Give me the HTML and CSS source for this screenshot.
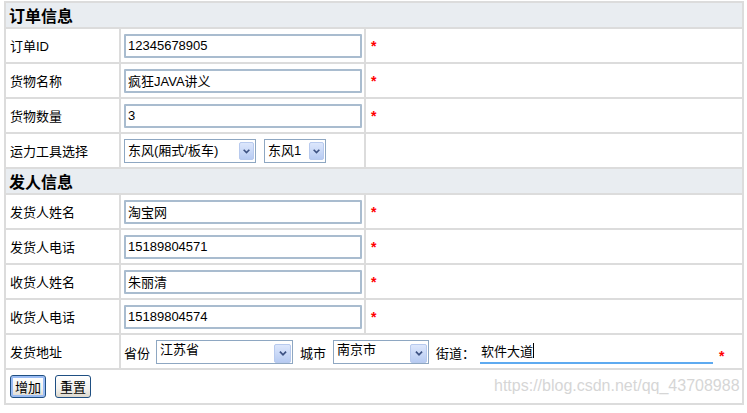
FILE: index.html
```html
<!DOCTYPE html>
<html lang="zh-CN">
<head>
<meta charset="utf-8">
<title>订单</title>
<link rel="stylesheet" href="styles.css">
</head>
<body>
<form class="order-form">
  <table class="form-table">
    <colgroup>
      <col class="c-label">
      <col class="c-field">
      <col class="c-mark">
    </colgroup>
    <tr class="section"><th colspan="3">订单信息</th></tr>
    <tr class="row">
      <td class="label">订单ID</td>
      <td class="field"><input class="text" type="text" value="12345678905"></td>
      <td class="mark"><span class="req">*</span></td>
    </tr>
    <tr class="row">
      <td class="label">货物名称</td>
      <td class="field"><input class="text" type="text" value="疯狂JAVA讲义"></td>
      <td class="mark"><span class="req">*</span></td>
    </tr>
    <tr class="row">
      <td class="label">货物数量</td>
      <td class="field"><input class="text" type="text" value="3"></td>
      <td class="mark"><span class="req">*</span></td>
    </tr>
    <tr class="row">
      <td class="label">运力工具选择</td>
      <td class="field">
        <div class="inline">
          <span class="sel sel-truck">
            <select><option>东风(厢式/板车)</option></select>
            <span class="arrow"><svg viewBox="0 0 16 18" width="14" height="16"><path d="M4.5 7.5 L8 11 L11.5 7.5" fill="none" stroke="#3d5283" stroke-width="2"/></svg></span>
          </span>
          <span class="sel sel-model">
            <select><option>东风1</option></select>
            <span class="arrow"><svg viewBox="0 0 16 18" width="14" height="16"><path d="M4.5 7.5 L8 11 L11.5 7.5" fill="none" stroke="#3d5283" stroke-width="2"/></svg></span>
          </span>
        </div>
      </td>
      <td class="mark"></td>
    </tr>
    <tr class="section"><th colspan="3">发人信息</th></tr>
    <tr class="row">
      <td class="label">发货人姓名</td>
      <td class="field"><input class="text" type="text" value="淘宝网"></td>
      <td class="mark"><span class="req">*</span></td>
    </tr>
    <tr class="row">
      <td class="label">发货人电话</td>
      <td class="field"><input class="text" type="text" value="15189804571"></td>
      <td class="mark"><span class="req">*</span></td>
    </tr>
    <tr class="row">
      <td class="label">收货人姓名</td>
      <td class="field"><input class="text" type="text" value="朱丽清"></td>
      <td class="mark"><span class="req">*</span></td>
    </tr>
    <tr class="row">
      <td class="label">收货人电话</td>
      <td class="field"><input class="text" type="text" value="15189804574"></td>
      <td class="mark"><span class="req">*</span></td>
    </tr>
    <tr class="row">
      <td class="label">发货地址</td>
      <td class="field" colspan="2">
        <div class="address">
          <span class="addr-label">省份</span>
          <span class="sel sel-prov">
            <select><option>江苏省</option></select>
            <span class="arrow"><svg viewBox="0 0 16 18" width="14" height="16"><path d="M4.5 7.5 L8 11 L11.5 7.5" fill="none" stroke="#3d5283" stroke-width="2"/></svg></span>
          </span>
          <span class="addr-label">城市</span>
          <span class="sel sel-city">
            <select><option>南京市</option></select>
            <span class="arrow"><svg viewBox="0 0 16 18" width="14" height="16"><path d="M4.5 7.5 L8 11 L11.5 7.5" fill="none" stroke="#3d5283" stroke-width="2"/></svg></span>
          </span>
          <span class="addr-label">街道：</span>
          <span class="street">软件大道<span class="caret"></span></span>
          <span class="req req-low">*</span>
        </div>
      </td>
    </tr>
    <tr class="row actions">
      <td colspan="3">
        <div class="buttons">
          <button type="button" class="btn btn-default">增加</button>
          <button type="reset" class="btn">重置</button>
        </div>
      </td>
    </tr>
  </table>
</form>
<div class="watermark">https://blog.csdn.net/qq_43708988</div>
</body>
</html>
```

FILE: styles.css
```css
html, body {
  margin: 0;
  background: #ffffff;
}

body {
  position: relative;
  padding: 1px 0 0 4px;
  width: 747px;
  height: 413px;
  box-sizing: border-box;
  overflow: hidden;
  font: 13px "Liberation Sans", "Noto Sans CJK SC", sans-serif;
  color: #000000;
}

.order-form {
  margin: 0;
}

.form-table {
  border-collapse: collapse;
  table-layout: fixed;
  width: 738px;
}

.c-label { width: 115px; }
.c-field { width: 245px; }
.c-mark { width: 378px; }

.form-table th,
.form-table td {
  border: 2px solid #dcdcdc;
  padding: 0 3px;
  vertical-align: middle;
}

.form-table td.label {
  padding-left: 4px;
}

.section th {
  height: 24px;
  background: #e9edf1;
  text-align: left;
  font-size: 16px;
  font-weight: bold;
  padding-left: 3px;
}

.row td {
  height: 33px;
}

.label {
  font-size: 13px;
}

.text {
  display: block;
  box-sizing: border-box;
  width: 238px;
  height: 24px;
  margin: 0;
  padding: 0 2px;
  border: 2px solid #a9bccf;
  border-radius: 1px;
  font: 13px "Liberation Sans", "Noto Sans CJK SC", sans-serif;
  color: #000;
  background: #fff;
  outline: none;
}

.req {
  color: #ff0000;
  font-size: 14px;
  font-weight: bold;
}

.form-table td.mark {
  padding-left: 5px;
}

.inline {
  display: flex;
  align-items: center;
  gap: 8px;
}

.sel {
  position: relative;
  display: inline-block;
  height: 24px;
}

.sel select {
  appearance: none;
  -webkit-appearance: none;
  box-sizing: border-box;
  width: 100%;
  height: 100%;
  margin: 0;
  padding: 0 18px 0 3px;
  border: 1px solid #8ea7c2;
  border-radius: 0;
  background: #fff;
  font: 13px "Liberation Sans", "Noto Sans CJK SC", sans-serif;
  color: #000;
  outline: none;
}

.sel .arrow {
  position: absolute;
  right: 2px;
  top: 3px;
  bottom: 3px;
  width: 15px;
  box-sizing: border-box;
  border: 1px solid #b8caee;
  border-radius: 2px;
  background: linear-gradient(#dde7fc, #b7cbf2);
  display: flex;
  align-items: center;
  justify-content: center;
  pointer-events: none;
}

.sel-truck { width: 132px; }
.sel-model { width: 62px; }
.sel-prov { width: 137px; margin-left: -1px; }
.sel-city { width: 96px; }

.sel-prov select,
.sel-city select {
  padding-bottom: 4px;
}

.sel-prov .arrow,
.sel-city .arrow {
  top: 4px;
  bottom: 1px;
  width: 17px;
}

.address {
  display: flex;
  align-items: center;
  gap: 7px;
}

.addr-label {
  padding-top: 2px;
}

.street {
  box-sizing: border-box;
  width: 233px;
  height: 24px;
  margin-left: -2px;
  padding: 0 1px;
  border-bottom: 2px solid #5eaaf0;
  display: flex;
  align-items: center;
}

.caret {
  display: inline-block;
  width: 1px;
  height: 15px;
  background: #000;
}

.req-low {
  margin-left: -1px;
  padding-top: 9px;
}

.actions td {
  padding: 0 4px;
}

.buttons {
  display: flex;
  gap: 9px;
}

.btn {
  box-sizing: border-box;
  height: 23px;
  padding: 0 4px;
  border: 1px solid #1f4f82;
  border-radius: 3px;
  background: linear-gradient(#ffffff, #f3f2ee 60%, #dcd8cd);
  font: 13px "Liberation Sans", "Noto Sans CJK SC", sans-serif;
  color: #000;
}

.btn-default {
  box-shadow: inset 0 0 0 2px #9bbcf3;
}

.watermark {
  position: absolute;
  left: 494px;
  top: 377px;
  font: 16px "Liberation Sans", sans-serif;
  color: #d6d6d6;
  white-space: nowrap;
}
```
